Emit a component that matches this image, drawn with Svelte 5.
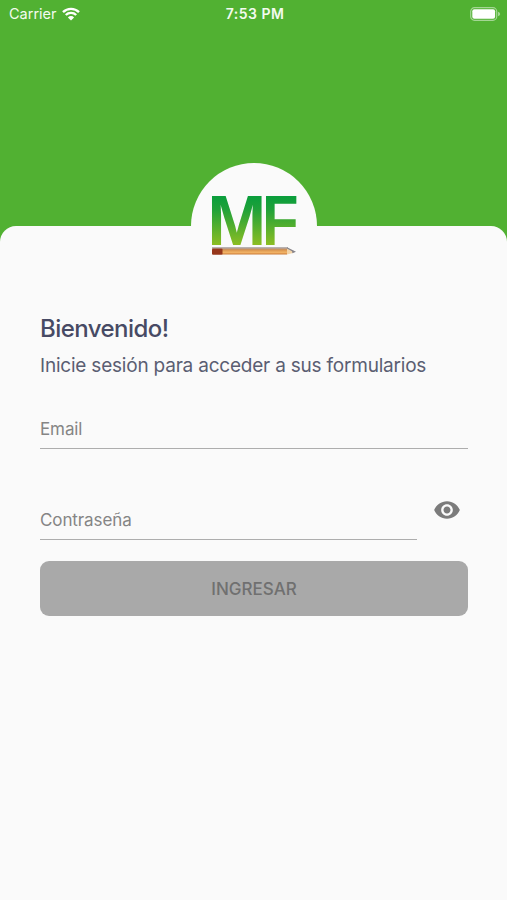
<script lang="ts">
	let email = $state('');
	let password = $state('');
	let showPassword = $state(false);

	const canSubmit = $derived(email.trim() !== '' && password !== '');

	function togglePassword(): void {
		showPassword = !showPassword;
	}
</script>

<div class="screen">
	<header class="status-bar">
		<div class="carrier">
			<span>Carrier</span>
			<svg class="wifi" viewBox="0 0 18 14" aria-hidden="true">
				<path d="M1 5.2A11.4 11.4 0 0 1 17 5.2" />
				<path d="M3.8 8A7.4 7.4 0 0 1 14.2 8" />
				<path class="dot" d="M9 13.6 5.9 10.4A4.4 4.4 0 0 1 12.1 10.4Z" />
			</svg>
		</div>
		<span class="time">7:53 PM</span>
		<svg class="battery" viewBox="0 0 31 14" aria-hidden="true">
			<rect class="shell" x="0.7" y="0.7" width="26" height="12.6" rx="3.8" />
			<rect x="2.3" y="2.3" width="22.8" height="9.4" rx="2" />
			<path class="cap" d="M28 4.7c1.6.5 2.1 1.4 2.1 2.3S29.6 8.8 28 9.3Z" />
		</svg>
	</header>

	<main class="sheet">
		<div class="logo">
			<svg viewBox="0 0 126 126" role="img" aria-label="MF">
				<defs>
					<linearGradient id="leaf" gradientUnits="userSpaceOnUse" x1="0" y1="34" x2="0" y2="83">
						<stop offset="0" stop-color="#0b9e3c" />
						<stop offset="0.25" stop-color="#1fa139" />
						<stop offset="1" stop-color="#8fbe22" />
					</linearGradient>
					<linearGradient id="wood" x1="0" y1="0" x2="0" y2="1">
						<stop offset="0" stop-color="#b98a68" />
						<stop offset="0.3" stop-color="#dc9850" />
						<stop offset="0.65" stop-color="#f2b366" />
						<stop offset="1" stop-color="#cb7a36" />
					</linearGradient>
				</defs>
				<text class="mark" y="82.2"
					><tspan x="16.3" textLength="59" lengthAdjust="spacingAndGlyphs">M</tspan><tspan
						x="71"
						textLength="36.5"
						lengthAdjust="spacingAndGlyphs">F</tspan
					></text
				>
				<rect x="21" y="84.2" width="76" height="1.6" fill="#a8a1a0" />
				<rect x="31" y="85.5" width="65" height="6" fill="url(#wood)" />
				<rect x="21" y="85.5" width="10.5" height="6.3" rx="1" fill="#96361b" />
				<path d="M96 85.2 102.500 87.700 102 90 96 91.500Z" fill="#f2d3a7" />
				<path d="M96 84.200 105 88.800 101.500 90.200 101 88.200 96 85.600Z" fill="#85838a" />
			</svg>
		</div>

		<h1>Bienvenido!</h1>
		<p class="subtitle">Inicie sesión para acceder a sus formularios</p>

		<form onsubmit={(e) => e.preventDefault()}>
			<input class="email" type="text" placeholder="Email" aria-label="Email" bind:value={email} />

			<div class="password-row">
				<input
					type={showPassword ? 'text' : 'password'}
					placeholder="Contraseña"
					aria-label="Contraseña"
					bind:value={password}
				/>
				<button class="eye" type="button" aria-label="Mostrar contraseña" onclick={togglePassword}>
					<svg viewBox="0 0 24 24" aria-hidden="true">
						<path
							d="M12 4.5C7 4.5 2.73 7.61 1 12c1.73 4.39 6 7.5 11 7.5s9.27-3.11 11-7.5c-1.73-4.39-6-7.5-11-7.5zM12 17c-2.76 0-5-2.24-5-5s2.24-5 5-5 5 2.24 5 5-2.24 5-5 5zm0-8c-1.66 0-3 1.34-3 3s1.34 3 3 3 3-1.34 3-3-1.34-3-3-3z"
						/>
					</svg>
				</button>
			</div>

			<button class="submit" type="submit" disabled={!canSubmit}>INGRESAR</button>
		</form>
	</main>
</div>

<style>
	:global(body) {
		background: #51b132;
	}

	.screen {
		display: flex;
		flex-direction: column;
		min-height: 100vh;
		background: #51b132;
		font-family: Inter, 'Liberation Sans', sans-serif;
	}

	.status-bar {
		display: grid;
		grid-template-columns: 1fr auto 1fr;
		align-items: center;
		height: 27px;
		margin-bottom: 199px;
		padding: 0 6px 0 9px;
		color: #f3fbef;
		font-size: 14.5px;
	}

	.carrier {
		display: flex;
		align-items: center;
		gap: 5px;
	}

	.time {
		font-weight: 600;
		font-size: 14px;
		letter-spacing: 0.5px;
	}

	.wifi {
		width: 18px;
		height: 14px;
		fill: none;
		stroke: #fff;
		stroke-width: 2.4;
	}

	.wifi .dot {
		fill: #fff;
		stroke: none;
	}

	.battery {
		justify-self: end;
		width: 31px;
		height: 14px;
		fill: #fff;
	}

	.battery .shell {
		fill: none;
		stroke: #a4d694;
		stroke-width: 1.2;
	}

	.battery .cap {
		fill: #a4d694;
	}

	.sheet {
		flex: 1;
		padding: 0 39px 0 40px;
		border-radius: 16px 16px 0 0;
		background: #fafafa;
	}

	.logo {
		width: 126px;
		height: 126px;
		margin: -63px auto 0;
		border-radius: 50%;
		background: #fafafa;
	}

	.logo svg {
		display: block;
		width: 100%;
	}

	.mark {
		fill: url(#leaf);
		font: bold 70.5px 'Liberation Sans', sans-serif;
	}

	h1 {
		margin: 25px 0 0;
		color: #474a64;
		font-size: 24px;
		font-weight: 500;
		line-height: 30px;
		letter-spacing: -0.55px;
	}

	.subtitle {
		margin: 10px 0 0;
		color: #5b5e72;
		font-size: 19px;
		line-height: 24px;
		letter-spacing: -0.21px;
		white-space: nowrap;
	}

	input {
		display: block;
		box-sizing: border-box;
		width: 100%;
		height: 40px;
		padding: 0;
		border: 0;
		border-bottom: 1px solid #adadad;
		border-radius: 0;
		outline: 0;
		background: none;
		color: #474a64;
		font: 17px Inter, 'Liberation Sans', sans-serif;
		letter-spacing: -0.1px;
	}

	input::placeholder {
		color: #858585;
		opacity: 1;
	}

	.email {
		margin-top: 31px;
	}

	.password-row {
		display: flex;
		align-items: flex-start;
		margin-top: 51px;
	}

	.password-row input {
		width: 377px;
	}

	.eye {
		margin: -4px 0 0 16px;
		padding: 0;
		border: 0;
		background: none;
	}

	.eye svg {
		display: block;
		width: 28px;
		height: 28px;
		fill: #7b7b7b;
	}

	.submit {
		display: block;
		width: 100%;
		height: 55px;
		margin-top: 21px;
		border: 0;
		border-radius: 9px;
		background: #a9a9a9;
		color: #707070;
		font: 500 17px Inter, 'Liberation Sans', sans-serif;
	}
</style>
